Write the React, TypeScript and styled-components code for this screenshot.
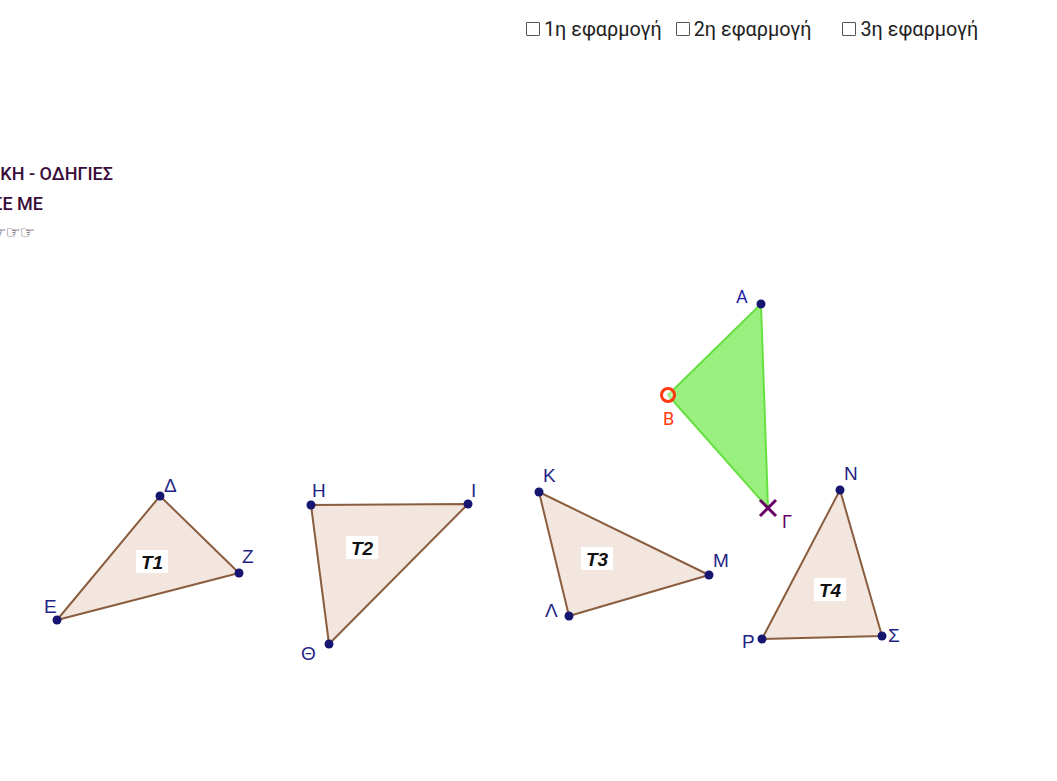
import React from 'react';
import styled, { createGlobalStyle } from 'styled-components';

const GlobalStyle = createGlobalStyle`
	html, body {
		margin: 0;
		padding: 0;
		background: #ffffff;
		overflow: hidden;
	}
`;

const Page = styled.div`
	width: 1057px;
	height: 781px;
	overflow: hidden;
	display: flex;
	flex-direction: column;
	font-family: Roboto, 'Liberation Sans', sans-serif;
`;

const Toolbar = styled.div`
	display: flex;
	align-items: center;
	height: 40px;
	padding: 9px 0 0 526px;
`;

const CheckItem = styled.label<{ gap: number }>`
	display: flex;
	align-items: center;
	margin-left: ${(p) => p.gap}px;
	font-size: 19.8px;
	color: #222;
	white-space: nowrap;
`;

const Box = styled.span`
	width: 12px;
	height: 12px;
	border: 1px solid #555;
	border-radius: 1px;
	margin-right: 4px;
	background: #fff;
`;

const Notes = styled.div`
	display: flex;
	flex-direction: column;
	margin-top: 110px;
	color: #3a0c3a;
	font-weight: 500;
	font-size: 18px;
`;

const NoteLine = styled.div<{ right: number }>`
	display: flex;
	justify-content: flex-end;
	width: ${(p) => p.right}px;
	height: 30px;
	line-height: 30px;
	white-space: nowrap;
`;

const Hands = styled.span`
	font-family: 'DejaVu Sans', sans-serif;
	font-size: 17px;
	font-weight: bold;
	line-height: 26px;
	letter-spacing: -1px;
	color: #2e0a2e;
`;

const Board = styled.svg`
	display: block;
	margin-top: 11px;
	flex-shrink: 0;
`;

type Pt = [number, number];

const tri = [
	{
		pts: [[160, 496], [239, 573], [57, 620]] as Pt[],
		name: 'T1',
		at: [152, 562] as Pt,
		labels: [['Δ', 164, 492], ['Z', 242, 563], ['E', 44, 613]],
	},
	{
		pts: [[311, 505], [468, 504], [329, 644]] as Pt[],
		name: 'T2',
		at: [362, 548] as Pt,
		labels: [['Η', 312, 497], ['Ι', 471, 497], ['Θ', 301, 660]],
	},
	{
		pts: [[539, 492], [709, 575], [569, 616]] as Pt[],
		name: 'T3',
		at: [597, 559] as Pt,
		labels: [['Κ', 543, 482], ['Μ', 713, 567], ['Λ', 545, 617]],
	},
	{
		pts: [[840, 490], [882, 636], [762, 639]] as Pt[],
		name: 'T4',
		at: [830, 590] as Pt,
		labels: [['Ν', 844, 480], ['Σ', 888, 642], ['Ρ', 742, 648]],
	},
];

const poly = (pts: Pt[]) => pts.map((p) => p.join(',')).join(' ');

const Figure = () => (
	<Board width="1057" height="420" viewBox="0 260 1057 420">
		{tri.map((t) => (
			<g key={t.name}>
				<polygon points={poly(t.pts)} fill="#f3e6de" stroke="#8a5d3e" strokeWidth="2" strokeLinejoin="round" />
				<rect x={t.at[0] - 16} y={t.at[1] - 12} width="32" height="23" fill="#fff" />
				<text
					x={t.at[0]}
					y={t.at[1] + 7}
					textAnchor="middle"
					fontFamily="'Liberation Sans', sans-serif"
					fontWeight="bold"
					fontStyle="italic"
					fontSize="19"
					fill="#111"
				>
					{t.name}
				</text>
				{t.pts.map((p, i) => (
					<circle key={i} cx={p[0]} cy={p[1]} r="4.5" fill="#161670" />
				))}
				{t.labels.map(([s, x, y]) => (
					<text key={s as string} x={x} y={y} fontFamily="'Liberation Sans', sans-serif" fontSize="19" fill="#1f2585">
						{s}
					</text>
				))}
			</g>
		))}

		<polygon points="761,304 668,395 768,508" fill="#99f07f" stroke="#66e040" strokeWidth="2" strokeLinejoin="round" />
		<circle cx="761" cy="304" r="4.5" fill="#161670" />
		<text x="736" y="303" fontFamily="Roboto, sans-serif" fontSize="18" fill="#1c1ca0">A</text>
		<circle cx="668" cy="395" r="6.5" fill="#fff" fillOpacity="0.4" stroke="#ff3a10" strokeWidth="3" />
		<text x="663" y="425" fontFamily="Roboto, sans-serif" fontSize="18" fill="#ff3a10">B</text>
		<path d="M760 500 L776 516 M776 500 L760 516" stroke="#660066" strokeWidth="3" />
		<text x="782" y="528" fontFamily="Roboto, sans-serif" fontSize="18" fill="#660066">Γ</text>
	</Board>
);

const App = () => {
	return (
		<Page>
			<GlobalStyle />
			<Toolbar>
				<CheckItem gap={0}>
					<Box />1η εφαρμογή
				</CheckItem>
				<CheckItem gap={14}>
					<Box />2η εφαρμογή
				</CheckItem>
				<CheckItem gap={31}>
					<Box />3η εφαρμογή
				</CheckItem>
			</Toolbar>
			<Notes>
				<NoteLine right={113}>ΕΙΣΑΓΩΓΙΚΗ - ΟΔΗΓΙΕΣ</NoteLine>
				<NoteLine right={43}>ΞΕΚΙΝΗΣΕ ΜΕ</NoteLine>
				<NoteLine right={34}>
					<Hands>☞☞☞☞</Hands>
				</NoteLine>
			</Notes>
			<Figure />
		</Page>
	);
};

export default App;
